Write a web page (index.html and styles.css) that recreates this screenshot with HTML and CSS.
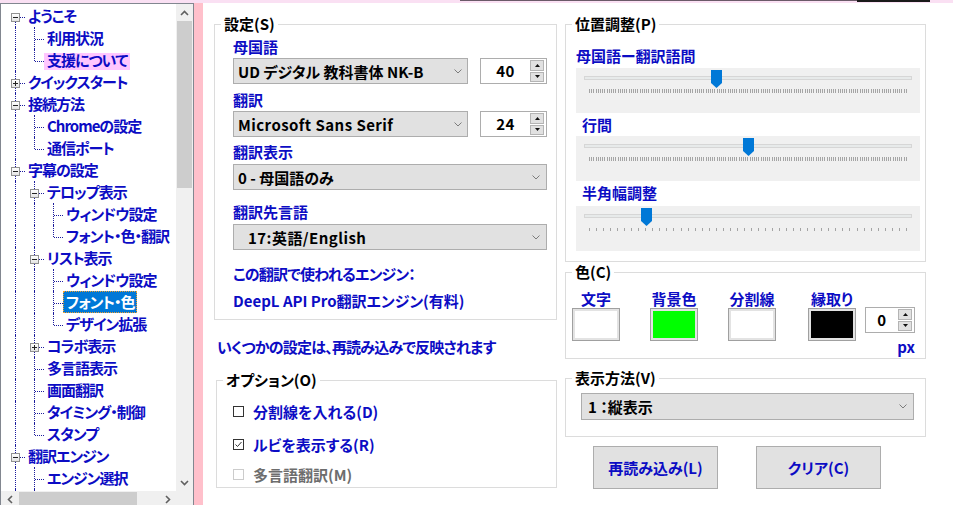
FILE: index.html
```html
<!DOCTYPE html>
<html lang="ja">
<head>
    <meta charset="UTF-8">
    <title>字幕の設定 - フォント・色</title>
    <link rel="stylesheet" href="styles.css">
</head>
<body>
    <div class="topbar"><div class="topbar-dark"></div><div class="topbar-black"></div></div>

    <div class="window">
        <!-- 左側のツリー -->
        <div class="tree-panel">
            <div class="tree">
                <div class="row"><span class="c f"><i class="box"></i></span><span class="lbl">ようこそ</span></div>
                <div class="row"><span class="c v"></span><span class="c t"></span><span class="lbl">利用状況</span></div>
                <div class="row"><span class="c v"></span><span class="c l"></span><span class="lbl pink">支援について</span></div>
                <div class="row"><span class="c t"><i class="box plus"></i></span><span class="lbl">クイックスタート</span></div>
                <div class="row"><span class="c t"><i class="box"></i></span><span class="lbl">接続方法</span></div>
                <div class="row"><span class="c v"></span><span class="c t"></span><span class="lbl">Chromeの設定</span></div>
                <div class="row"><span class="c v"></span><span class="c l"></span><span class="lbl">通信ポート</span></div>
                <div class="row"><span class="c t"><i class="box"></i></span><span class="lbl">字幕の設定</span></div>
                <div class="row"><span class="c v"></span><span class="c t"><i class="box"></i></span><span class="lbl">テロップ表示</span></div>
                <div class="row"><span class="c v"></span><span class="c v"></span><span class="c t"></span><span class="lbl">ウィンドウ設定</span></div>
                <div class="row"><span class="c v"></span><span class="c v"></span><span class="c l"></span><span class="lbl">フォント・色・翻訳</span></div>
                <div class="row"><span class="c v"></span><span class="c t"><i class="box"></i></span><span class="lbl">リスト表示</span></div>
                <div class="row"><span class="c v"></span><span class="c v"></span><span class="c t"></span><span class="lbl">ウィンドウ設定</span></div>
                <div class="row"><span class="c v"></span><span class="c v"></span><span class="c t"></span><span class="lbl selected">フォント・色</span></div>
                <div class="row"><span class="c v"></span><span class="c v"></span><span class="c l"></span><span class="lbl">デザイン拡張</span></div>
                <div class="row"><span class="c v"></span><span class="c t"><i class="box plus"></i></span><span class="lbl">コラボ表示</span></div>
                <div class="row"><span class="c v"></span><span class="c t"></span><span class="lbl">多言語表示</span></div>
                <div class="row"><span class="c v"></span><span class="c t"></span><span class="lbl">画面翻訳</span></div>
                <div class="row"><span class="c v"></span><span class="c t"></span><span class="lbl">タイミング・制御</span></div>
                <div class="row"><span class="c v"></span><span class="c l"></span><span class="lbl">スタンプ</span></div>
                <div class="row"><span class="c t"><i class="box"></i></span><span class="lbl">翻訳エンジン</span></div>
                <div class="row"><span class="c v"></span><span class="c t"></span><span class="lbl">エンジン選択</span></div>
                <div class="row"><span class="c v"></span><span class="c v"></span><span class="lbl"></span></div>
            </div>

            <div class="vscroll">
                <div class="sb-btn"><svg width="9" height="6" viewBox="0 0 9 6"><polyline points="1,5 4.5,1.5 8,5" /></svg></div>
                <div class="vtrack"><div class="vthumb"></div></div>
                <div class="sb-btn"><svg width="9" height="6" viewBox="0 0 9 6"><polyline points="1,1 4.5,4.5 8,1" /></svg></div>
            </div>
            <div class="hscroll">
                <div class="sb-btn"><svg width="6" height="9" viewBox="0 0 6 9"><polyline points="5,1 1.5,4.5 5,8" /></svg></div>
                <div class="htrack"><div class="hthumb"></div></div>
                <div class="sb-btn"><svg width="6" height="9" viewBox="0 0 6 9"><polyline points="1,1 4.5,4.5 1,8" /></svg></div>
            </div>
            <div class="sb-corner"></div>
        </div>

        <div class="splitter"></div>

        <!-- 設定画面 -->
        <div class="content">
            <div class="col-left">
                <fieldset class="group">
                    <legend>設定(S)</legend>
                    <div class="settings-body">
                        <div class="flabel mt4">母国語</div>
                        <div class="combo-row mt1">
                            <div class="combo short"><span>UD デジタル 教科書体 NK-B</span><svg width="8" height="5" viewBox="0 0 8 5"><polyline points="0.5,0.5 4,4 7.5,0.5" /></svg></div>
                            <div class="spin">
                                <div class="spin-val">40</div>
                                <div class="spin-btns">
                                    <span><svg width="5" height="3" viewBox="0 0 5 3"><path d="M0 3 L2.5 0 L5 3 Z" /></svg></span>
                                    <span><svg width="5" height="3" viewBox="0 0 5 3"><path d="M0 0 L2.5 3 L5 0 Z" /></svg></span>
                                </div>
                            </div>
                        </div>

                        <div class="flabel mt6">翻訳</div>
                        <div class="combo-row mt1">
                            <div class="combo short latin"><span>Microsoft Sans Serif</span><svg width="8" height="5" viewBox="0 0 8 5"><polyline points="0.5,0.5 4,4 7.5,0.5" /></svg></div>
                            <div class="spin">
                                <div class="spin-val">24</div>
                                <div class="spin-btns">
                                    <span><svg width="5" height="3" viewBox="0 0 5 3"><path d="M0 3 L2.5 0 L5 3 Z" /></svg></span>
                                    <span><svg width="5" height="3" viewBox="0 0 5 3"><path d="M0 0 L2.5 3 L5 0 Z" /></svg></span>
                                </div>
                            </div>
                        </div>

                        <div class="flabel mt5">翻訳表示</div>
                        <div class="combo wide mt2"><span>0 - 母国語のみ</span><svg width="8" height="5" viewBox="0 0 8 5"><polyline points="0.5,0.5 4,4 7.5,0.5" /></svg></div>

                        <div class="flabel mt12">翻訳先言語</div>
                        <div class="combo wide indent latin mt2"><span>17:英語/English</span><svg width="8" height="5" viewBox="0 0 8 5"><polyline points="0.5,0.5 4,4 7.5,0.5" /></svg></div>

                        <div class="flabel kana mt14">この翻訳で使われるエンジン：</div>
                        <div class="flabel mt7">DeepL API Pro翻訳エンジン(有料)</div>
                    </div>
                </fieldset>

                <div class="note">いくつかの設定は、再読み込みで反映されます</div>

                <fieldset class="group options">
                    <legend>オプション(O)</legend>
                    <div class="options-body">
                        <label class="check-row mt12"><span class="cbox"></span>分割線を入れる(D)</label>
                        <label class="check-row mt13"><span class="cbox"><svg width="9" height="9" viewBox="0 0 9 9"><polyline points="1.5,4.5 3.5,6.5 7.5,2" /></svg></span>ルビを表示する(R)</label>
                        <label class="check-row mt10 disabled"><span class="cbox"></span>多言語翻訳(M)</label>
                    </div>
                </fieldset>
            </div>

            <div class="col-right">
                <fieldset class="group">
                    <legend>位置調整(P)</legend>
                    <div class="position-body">
                        <div class="flabel mt13">母国語ー翻訳語間</div>
                        <div class="slider mt2">
                            <div class="track"></div>
                            <div class="ticks dense"></div>
                            <div class="axis"><svg class="thumb" style="left: 40%" width="11" height="18" viewBox="0 0 11 18"><path d="M0 0 H11 V13 L5.5 18 L0 13 Z" /></svg></div>
                        </div>
                        <div class="flabel sub mt2">行間</div>
                        <div class="slider mt1">
                            <div class="track"></div>
                            <div class="ticks dense"></div>
                            <div class="axis"><svg class="thumb" style="left: 50%" width="11" height="18" viewBox="0 0 11 18"><path d="M0 0 H11 V13 L5.5 18 L0 13 Z" /></svg></div>
                        </div>
                        <div class="flabel sub mt2">半角幅調整</div>
                        <div class="slider mt3">
                            <div class="track"></div>
                            <div class="ticks sparse"></div>
                            <div class="axis"><svg class="thumb" style="left: 17.8%" width="11" height="18" viewBox="0 0 11 18"><path d="M0 0 H11 V13 L5.5 18 L0 13 Z" /></svg></div>
                        </div>
                    </div>
                </fieldset>

                <fieldset class="group colors">
                    <legend>色(C)</legend>
                    <div class="colors-body">
                        <div class="swatches">
                            <div class="swatch"><div class="swatch-name">文字</div><div class="swatch-box"><div class="swatch-fill" style="background: #ffffff"></div></div></div>
                            <div class="swatch"><div class="swatch-name">背景色</div><div class="swatch-box"><div class="swatch-fill" style="background: #00ff00"></div></div></div>
                            <div class="swatch"><div class="swatch-name">分割線</div><div class="swatch-box"><div class="swatch-fill" style="background: #ffffff"></div></div></div>
                            <div class="swatch edge"><div class="swatch-name">縁取り</div><div class="swatch-box"><div class="swatch-fill" style="background: #000000"></div></div></div>
                        </div>
                        <div class="edge-col">
                            <div class="spin small">
                                <div class="spin-val">0</div>
                                <div class="spin-btns">
                                    <span><svg width="5" height="3" viewBox="0 0 5 3"><path d="M0 3 L2.5 0 L5 3 Z" /></svg></span>
                                    <span><svg width="5" height="3" viewBox="0 0 5 3"><path d="M0 0 L2.5 3 L5 0 Z" /></svg></span>
                                </div>
                            </div>
                            <div class="px">px</div>
                        </div>
                    </div>
                </fieldset>

                <fieldset class="group view">
                    <legend>表示方法(V)</legend>
                    <div class="view-body">
                        <div class="combo view-combo"><span>1 ：縦表示</span><svg width="8" height="5" viewBox="0 0 8 5"><polyline points="0.5,0.5 4,4 7.5,0.5" /></svg></div>
                    </div>
                </fieldset>

                <div class="btn-row">
                    <div class="btn">再読み込み(L)</div>
                    <div class="btn">クリア(C)</div>
                </div>
            </div>
        </div>
    </div>
</body>
</html>
```

FILE: styles.css
```css
* {
    box-sizing: border-box;
}

body {
    margin: 0;
    background: #fff;
    font-family: "Noto Sans CJK JP", sans-serif;
    font-size: 15px;
    font-weight: 700;
    font-feature-settings: "palt" 1;
    color: #000;
    overflow: hidden;
}

.topbar {
    display: flex;
    height: 3px;
    background: #fae0f3;
}

.topbar-dark {
    margin-left: 460px;
    width: 397px;
    height: 1px;
    background: #6a5a68;
}

.topbar-black {
    width: 73px;
    height: 2px;
    background: #1a1a1a;
}

.window {
    display: flex;
    height: 502px;
}

/* ツリー */
.tree-panel {
    flex: none;
    width: 194px;
    display: grid;
    grid-template-columns: 175px 17px;
    grid-template-rows: 487px 17px;
    border: 1px solid #828790;
    border-bottom: 0;
    background: #fff;
    overflow: hidden;
}

.tree {
    padding: 1px 0 0 5px;
    overflow: hidden;
    color: #0c0cc4;
    letter-spacing: -1px;
}

.row {
    display: flex;
    height: 22px;
    white-space: nowrap;
}

.c {
    position: relative;
    flex: none;
    width: 19px;
}

.c::before,
.c::after {
    content: '';
    position: absolute;
}

.c.v::before,
.c.t::before {
    left: 9px;
    top: 0;
    bottom: 0;
    border-left: 1px dotted #1c1c9c;
}

.c.l::before {
    left: 9px;
    top: 0;
    height: 12px;
    border-left: 1px dotted #1c1c9c;
}

.c.f::before {
    left: 9px;
    top: 12px;
    bottom: 0;
    border-left: 1px dotted #1c1c9c;
}

.c.t::after,
.c.l::after,
.c.f::after {
    left: 10px;
    right: 0;
    top: 12px;
    border-top: 1px dotted #1c1c9c;
}

.box {
    position: absolute;
    left: 5px;
    top: 8px;
    width: 9px;
    height: 9px;
    border: 1px solid #919191;
    background: linear-gradient(#ffffff, #e4e4e4);
    z-index: 1;
}

.box::before {
    content: '';
    position: absolute;
    left: 1px;
    top: 3px;
    width: 5px;
    height: 1px;
    background: #222;
}

.box.plus::after {
    content: '';
    position: absolute;
    left: 3px;
    top: 1px;
    width: 1px;
    height: 5px;
    background: #222;
}

.lbl {
    padding: 0 3px;
    line-height: 22px;
}

.lbl.pink {
    background: linear-gradient(transparent 4px, #ffc6ff 4px, #ffc6ff 21px, transparent 21px);
}

.lbl.selected {
    background: #0078d7;
    color: #fff;
    outline: 1px dotted #f0a030;
    outline-offset: -1px;
}

/* スクロールバー */
.vscroll {
    display: flex;
    flex-direction: column;
    background: #f0f0f0;
}

.hscroll {
    display: flex;
    background: #f0f0f0;
}

.sb-btn {
    flex: none;
    display: flex;
    align-items: center;
    justify-content: center;
    width: 17px;
    height: 17px;
}

.sb-btn svg polyline {
    fill: none;
    stroke: #606060;
    stroke-width: 1.6;
}

.vtrack {
    flex: 1;
    padding: 0 1px;
}

.vthumb {
    height: 167px;
    background: #cdcdcd;
}

.htrack {
    flex: 1;
    padding: 1px 0 0 1px;
}

.hthumb {
    width: 118px;
    height: 15px;
    background: #cdcdcd;
}

.sb-corner {
    background: #f0f0f0;
}

.splitter {
    flex: none;
    width: 9px;
    background: #ffc0cb;
}

/* 右側 */
.content {
    flex: 1;
    display: flex;
    gap: 8px;
    padding: 12px 0 0 11px;
    background: #fff;
}

.col-left {
    flex: none;
    width: 343px;
}

.col-right {
    flex: none;
    width: 361px;
}

.group {
    margin: 0;
    padding: 0;
    min-width: 0;
    border: 1px solid #dcdcdc;
}

.group legend {
    margin-left: 6px;
    padding: 0 3px;
    line-height: 18px;
    color: #000;
}

.flabel {
    line-height: 20px;
    color: #0c0cc4;
    white-space: nowrap;
}

.flabel.kana {
    letter-spacing: -0.8px;
}

.mt1 { margin-top: 1px; }
.mt2 { margin-top: 2px; }
.mt3 { margin-top: 3px; }
.mt4 { margin-top: 4px; }
.mt5 { margin-top: 5px; }
.mt6 { margin-top: 6px; }
.mt7 { margin-top: 7px; }
.mt10 { margin-top: 10px; }
.mt12 { margin-top: 12px; }
.mt13 { margin-top: 13px; }
.mt14 { margin-top: 14px; }

.settings-body {
    padding: 0 9px 8px 18px;
}

.combo-row {
    display: flex;
    gap: 12px;
}

.combo {
    display: flex;
    align-items: center;
    height: 26px;
    padding: 0 6px 0 4px;
    background: #e1e1e1;
    border: 1px solid #adadad;
    color: #000;
    white-space: nowrap;
}

.combo span {
    flex: 1;
}

.combo.latin span {
    letter-spacing: 0.45px;
}

.combo svg polyline {
    fill: none;
    stroke: #7c7c7c;
    stroke-width: 1;
}

.combo.short {
    width: 235px;
    padding-right: 5px;
}

.combo.wide {
    width: 314px;
}

.combo.indent {
    padding-left: 14px;
}

.spin {
    display: flex;
    width: 67px;
    height: 26px;
    border: 1px solid #adadad;
    background: #fff;
}

.spin-val {
    flex: 1;
    text-align: center;
    line-height: 24px;
    letter-spacing: 0.5px;
}

.spin-btns {
    display: flex;
    flex-direction: column;
    gap: 1px;
    width: 16px;
    padding: 1px 2px 1px 0;
}

.spin-btns span {
    flex: 1;
    display: flex;
    align-items: center;
    justify-content: center;
    background: #e1e1e1;
    border: 1px solid #b4b4b4;
}

.spin-btns path {
    fill: #111;
}

.note {
    margin: 17px 0 0 3px;
    line-height: 20px;
    color: #0c0cc4;
    white-space: nowrap;
    letter-spacing: -0.8px;
}

.group.options {
    margin: 14px 0 0 2px;
}

.options-body {
    padding: 0 0 3px 16px;
}

.check-row {
    display: flex;
    align-items: center;
    height: 20px;
    color: #0c0cc4;
}

.cbox {
    display: flex;
    align-items: center;
    justify-content: center;
    width: 11px;
    height: 11px;
    margin-right: 9px;
    border: 1px solid #333;
    background: #fff;
}

.cbox svg polyline {
    fill: none;
    stroke: #333;
    stroke-width: 1;
}

.check-row.disabled {
    color: #6d6d6d;
}

.check-row.disabled .cbox {
    border-color: #cccccc;
}

/* 位置調整 */
.position-body {
    padding: 0 5px 10px 10px;
}

.flabel.sub {
    margin-left: 6px;
}

.slider {
    position: relative;
    height: 45px;
    padding: 8px 8px 0;
    background: #f0f0f0;
}

.track {
    height: 4px;
    background: #e7eaea;
    border: 1px solid #d6d6d6;
}

.ticks {
    position: absolute;
    left: 13px;
    right: 12px;
    top: 21px;
    height: 4px;
}

.ticks.dense {
    background: repeating-linear-gradient(to right, #a4a4a4 0 1px, transparent 1px 2.2px);
}

.ticks.sparse {
    top: 22px;
    height: 3px;
    background: repeating-linear-gradient(to right, #a4a4a4 0 1px, transparent 1px 7.04px);
}

.axis {
    position: absolute;
    left: 13px;
    right: 13px;
    top: 2px;
    height: 18px;
}

.thumb {
    position: absolute;
    top: 0;
    margin-left: -5px;
}

.thumb path {
    fill: #0078d7;
}

/* 色 */
.group.colors {
    margin-top: 1px;
}

.colors-body {
    display: flex;
    gap: 9px;
    padding: 0 0 2px 6px;
}

.swatches {
    display: flex;
    gap: 30px;
    margin-top: 9px;
}

.swatch {
    display: flex;
    flex-direction: column;
    align-items: center;
    width: 48px;
}

.swatch.edge {
    margin-left: 2px;
}

.swatch-name {
    line-height: 18px;
    color: #0c0cc4;
    white-space: nowrap;
}

.swatch-box {
    width: 48px;
    height: 33px;
    padding: 2px;
    border: 1px solid #a0a0a0;
    background: #e3e3e3;
}

.swatch-fill {
    height: 100%;
}

.edge-col {
    padding-top: 26px;
}

.spin.small {
    width: 50px;
}

.px {
    margin-top: 5px;
    line-height: 18px;
    text-align: right;
    color: #0c0cc4;
}

/* 表示方法 */
.group.view {
    margin-top: 10px;
}

.view-body {
    padding: 6px 10px 16px 15px;
}

.combo.view-combo {
    width: 333px;
    height: 27px;
    padding-left: 6px;
}

.btn-row {
    display: flex;
    gap: 38px;
    margin-top: 9px;
    padding-left: 28px;
}

.btn {
    display: flex;
    align-items: center;
    justify-content: center;
    width: 125px;
    height: 43px;
    background: #e1e1e1;
    border: 1px solid #adadad;
    color: #0c0cc4;
}
```
